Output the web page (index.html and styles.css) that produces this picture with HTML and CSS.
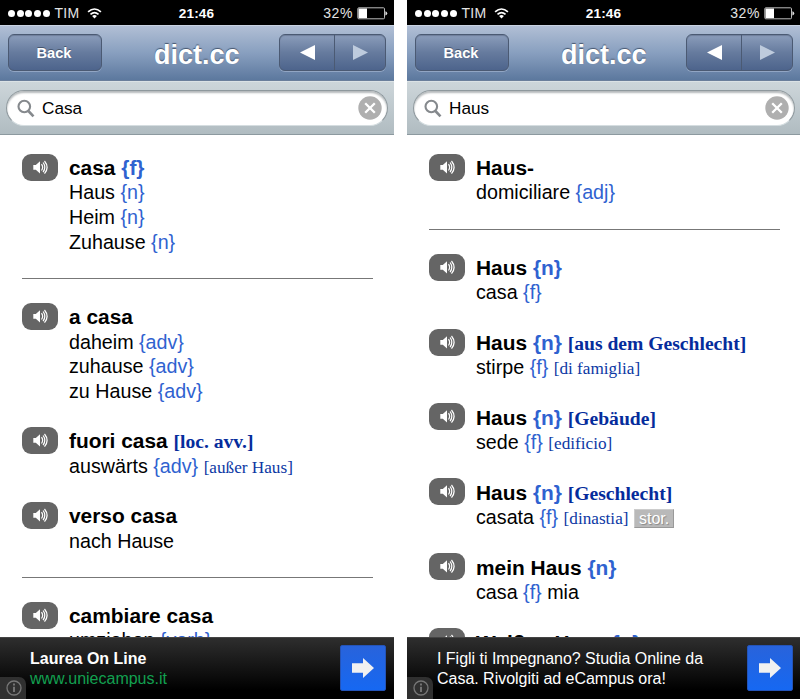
FILE: index.html
```html
<!DOCTYPE html>
<html lang="it">
<head>
<meta charset="utf-8">
<title>dict.cc</title>
<link rel="stylesheet" href="styles.css">
</head>
<body>
<svg width="0" height="0" class="defs">
  <symbol id="wifi" viewBox="0 0 16 12"><g fill="none" stroke="#fff" stroke-width="1.8"><path d="M1 4.3Q8-2.1 15 4.3"/><path d="M3.6 7Q8 3 12.4 7"/></g><path d="M5.4 8.6Q8 6.6 10.6 8.6L8 11.4z" fill="#fff"/></symbol>
  <symbol id="battery" viewBox="0 0 31 13"><rect x=".8" y=".8" width="26.7" height="11" rx="1" fill="none" stroke="#bbb"/><rect x="1.5" y="1.5" width="8.5" height="9.6" fill="#fff"/><path d="M28.4 4.2q1.8.3 1.8 2.1t-1.8 2.1z" fill="#ddd"/></symbol>
  <symbol id="search" viewBox="0 0 18 19"><circle cx="7.3" cy="7.5" r="5.8" fill="none" stroke="#85898d" stroke-width="2.1"/><path d="M11.4 12l5.1 5.3" stroke="#85898d" stroke-width="2.6"/></symbol>
  <symbol id="clear" viewBox="0 0 24 24"><circle cx="12" cy="12" r="11.7" fill="#afafaf"/><path d="M7.2 7.2l9.6 9.6M16.8 7.2l-9.6 9.6" stroke="#fff" stroke-width="2.3"/></symbol>
  <symbol id="sound" viewBox="0 0 15 15"><path d="M.3 5h2.5L7 1.2v12.3L2.8 9.7H.3z" fill="#fff"/><g fill="none" stroke="#fff" stroke-width="1.2"><path d="M8.5 4.2q2.3 3.1 0 6.3"/><path d="M10.1 2.5q3.5 4.8 0 9.7"/><path d="M11.5 1q5.2 6.4 0 12.7"/></g></symbol>
  <symbol id="info" viewBox="0 0 16 16"><circle cx="8" cy="8" r="7" fill="none" stroke="#777" stroke-width="1.3"/><path d="M8 3.5v2M8 6.8v5.2" stroke="#777" stroke-width="1.9"/></symbol>
  <symbol id="go" viewBox="0 0 22 20"><path d="M0 5.2h11V0l11 10-11 10v-5.2H0z" fill="#f1f1f1"/></symbol>
</svg>
<div class="screens">
  <section class="phone">
    <div class="status">
      <div class="carrier"><i></i><i></i><i></i><i></i><i></i><span>TIM</span><svg class="wifi"><use href="#wifi"/></svg></div>
      <b>21:46</b>
      <div class="power"><span>32%</span><svg class="battery"><use href="#battery"/></svg></div>
    </div>
    <header class="nav">
      <div class="button">Back</div><h1>dict.cc</h1>
      <div class="arrows"><span><svg width="15" height="15"><path d="M0 7.5L15 0v15z" fill="#fff"/></svg></span><span><svg width="15" height="15"><path d="M15 7.5L0 0v15z" fill="#becbdd"/></svg></span></div>
    </header>
    <div class="searchbar"><div class="field"><svg class="lens"><use href="#search"/></svg><span>Casa</span><svg class="clear"><use href="#clear"/></svg></div></div>
    <main class="results">
      <article><div class="speak"><svg><use href="#sound"/></svg></div><div><h2>casa <em>{f}</em></h2><p>Haus <em>{n}</em></p><p>Heim <em>{n}</em></p><p>Zuhause <em>{n}</em></p></div></article>
      <hr>
      <article><div class="speak"><svg><use href="#sound"/></svg></div><div><h2>a casa</h2><p>daheim <em>{adv}</em></p><p>zuhause <em>{adv}</em></p><p>zu Hause <em>{adv}</em></p></div></article>
      <article><div class="speak"><svg><use href="#sound"/></svg></div><div><h2>fuori casa <q>[loc. avv.]</q></h2><p>auswärts <em>{adv}</em> <q>[außer Haus]</q></p></div></article>
      <article><div class="speak"><svg><use href="#sound"/></svg></div><div><h2>verso casa</h2><p>nach Hause</p></div></article>
      <hr>
      <article><div class="speak"><svg><use href="#sound"/></svg></div><div><h2>cambiare casa</h2><p>umziehen <em>{verb}</em></p></div></article>
    </main>
    <footer class="ad"><div class="info"><svg><use href="#info"/></svg></div><div class="copy"><b>Laurea On Line</b><span class="link">www.uniecampus.it</span></div><div class="go"><svg><use href="#go"/></svg></div></footer>
  </section>
  <section class="phone">
    <div class="status">
      <div class="carrier"><i></i><i></i><i></i><i></i><i></i><span>TIM</span><svg class="wifi"><use href="#wifi"/></svg></div>
      <b>21:46</b>
      <div class="power"><span>32%</span><svg class="battery"><use href="#battery"/></svg></div>
    </div>
    <header class="nav">
      <div class="button">Back</div><h1>dict.cc</h1>
      <div class="arrows"><span><svg width="15" height="15"><path d="M0 7.5L15 0v15z" fill="#fff"/></svg></span><span><svg width="15" height="15"><path d="M15 7.5L0 0v15z" fill="#becbdd"/></svg></span></div>
    </header>
    <div class="searchbar"><div class="field"><svg class="lens"><use href="#search"/></svg><span>Haus</span><svg class="clear"><use href="#clear"/></svg></div></div>
    <main class="results">
      <article><div class="speak"><svg><use href="#sound"/></svg></div><div><h2>Haus-</h2><p>domiciliare <em>{adj}</em></p></div></article>
      <hr>
      <article><div class="speak"><svg><use href="#sound"/></svg></div><div><h2>Haus <em>{n}</em></h2><p>casa <em>{f}</em></p></div></article>
      <article><div class="speak"><svg><use href="#sound"/></svg></div><div><h2>Haus <em>{n}</em> <q>[aus dem Geschlecht]</q></h2><p>stirpe <em>{f}</em> <q>[di famiglia]</q></p></div></article>
      <article><div class="speak"><svg><use href="#sound"/></svg></div><div><h2>Haus <em>{n}</em> <q>[Gebäude]</q></h2><p>sede <em>{f}</em> <q>[edificio]</q></p></div></article>
      <article><div class="speak"><svg><use href="#sound"/></svg></div><div><h2>Haus <em>{n}</em> <q>[Geschlecht]</q></h2><p>casata <em>{f}</em> <q>[dinastia]</q> <span class="tag">stor.</span></p></div></article>
      <article><div class="speak"><svg><use href="#sound"/></svg></div><div><h2>mein Haus <em>{n}</em></h2><p>casa <em>{f}</em> mia</p></div></article>
      <article><div class="speak"><svg><use href="#sound"/></svg></div><div><h2>Weißes Haus <em>{n}</em></h2></div></article>
    </main>
    <footer class="ad"><div class="info"><svg><use href="#info"/></svg></div><div class="copy wide"><span>I Figli ti Impegnano? Studia Online da</span><span>Casa. Rivolgiti ad eCampus ora!</span></div><div class="go"><svg><use href="#go"/></svg></div></footer>
  </section>
</div>
</body>
</html>
```
FILE: styles.css
```css
* { box-sizing: border-box; }
body { margin: 0; background: #fff; font-family: "Liberation Sans", Arial, sans-serif; overflow: hidden; }
svg { display: block; flex: none; }
.defs { position: absolute; }
.screens { display: flex; gap: 13px; width: 801px; height: 699px; }
.phone { width: 394px; height: 699px; display: flex; flex-direction: column; overflow: hidden; flex: none; }

.status { height: 25px; flex: none; background: #000; color: #fff; display: grid; grid-template-columns: 1fr auto 1fr; align-items: center; padding: 1px 6px 0 8px; font-size: 14px; }
.carrier, .power { display: flex; align-items: center; color: #e4e4e4; }
.carrier i { width: 7px; height: 7px; border-radius: 50%; background: #fff; margin-right: 1.7px; }
.carrier span { margin-left: 3px; letter-spacing: .3px; }
.wifi { width: 15px; height: 11px; margin-left: 8px; }
.status b { font-weight: bold; font-size: 13.6px; letter-spacing: .1px; margin-right: 3px; }
.power { justify-content: flex-end; letter-spacing: .6px; }
.battery { width: 31px; height: 13px; margin-left: 4px; }

.nav { height: 56px; flex: none; display: grid; grid-template-columns: 94px 1fr 107px; align-items: center; padding: 0 8px 1px; border-top: 1px solid #c9d3e2; border-bottom: 1px solid #6b7f9b; background: linear-gradient(#b1bfd5, #889fbf 50%, #5c789e); color: #fff; }
.button, .arrows { height: 37px; border: 1px solid #4b5a73; border-radius: 6px; background: linear-gradient(#8b9dbb, #667b9e 50%, #4d648c); box-shadow: 0 1px 0 #91a5c3, inset 0 1px 1px #6e7f9c; }
.button { display: flex; align-items: center; justify-content: center; padding-right: 2px; font-size: 14.6px; font-weight: bold; text-shadow: 0 -1px 0 #46566f; }
.nav h1 { margin: 4px 0 0 13px; padding-left: 39px; font-size: 27px; line-height: 32px; text-shadow: 0 -1px 1px #46566f; }
.arrows { display: flex; }
.arrows span { width: 54px; display: flex; align-items: center; justify-content: center; }
.arrows span + span { flex: 1; border-left: 1px solid #4b5a73; }

.searchbar { height: 54px; flex: none; padding: 8px 6px 9px; border-bottom: 1px solid #8c999f; border-top: 1px solid #dbe2e5; background: linear-gradient(#cdd6da, #b0bcc1); }
.field { height: 36px; border-radius: 18px; background: #fff; border: 1px solid #8e989d; border-bottom-color: #d5dde0; box-shadow: inset 0 2px 2px #b5b9bb; display: flex; align-items: center; padding: 0 5px 0 10px; font-size: 17.2px; }
.lens { width: 18px; height: 19px; }
.field span { flex: 1; margin: 1px 0 0 7px; }
.clear { width: 24px; height: 24px; }

.results { flex: 1; min-height: 0; overflow: hidden; padding: 20.2px 21px 0 22px; color: #000; }
article { display: flex; gap: 11px; margin-bottom: 25px; white-space: nowrap; }
.speak { width: 36px; height: 27px; border-radius: 9px; background: #656565; flex: none; display: flex; align-items: center; justify-content: center; margin-top: -1.4px; }
.speak svg { width: 15px; height: 15px; }
h2, p { margin: 0; font-size: 19.7px; line-height: 25.2px; height: 24.6px; }
h2 { font-size: 20.9px; line-height: 25.3px; height: 25.3px; }
em { font-style: normal; color: #2f62d0; }
q { quotes: none; font-family: "Liberation Serif", serif; font-size: 17.2px; color: #0c38a4; }
h2 q { font-size: 19.6px; color: #052c9c; }
hr { height: 1px; border: 0; margin: -1px 0 25px; background: #777; }
.tag { display: inline-block; height: 19px; line-height: 18px; padding: 0 4px; font-size: 16px; color: #fff; background: #b9b9b9; border: 1px solid #999; border-top-color: #ccc; border-left-color: #ccc; text-shadow: 1px 1px 1px #888; vertical-align: 0; }

.ad { height: 62px; flex: none; display: flex; border-top: 1px solid #444; background: linear-gradient(#2e2e2e, #000 85%); color: #fff; padding-right: 8px; }
.info { width: 26px; height: 22px; align-self: flex-end; background: #303030; border-radius: 0 7px 0 0; padding: 3px 0 0 6px; }
.info svg { width: 16px; height: 16px; }
.copy { flex: 1; padding: 11px 0 0 4px; display: flex; flex-direction: column; font-size: 16px; line-height: 20px; white-space: nowrap; }
.copy.wide { letter-spacing: -.02px; }
.link { color: #12a050; }
.go { width: 46px; height: 46px; margin-top: 7px; border: 1px solid #2454b8; border-radius: 2px; background: linear-gradient(#2863db, #1668f2); display: flex; align-items: center; justify-content: center; }
.go svg { width: 22px; height: 20px; }
```
